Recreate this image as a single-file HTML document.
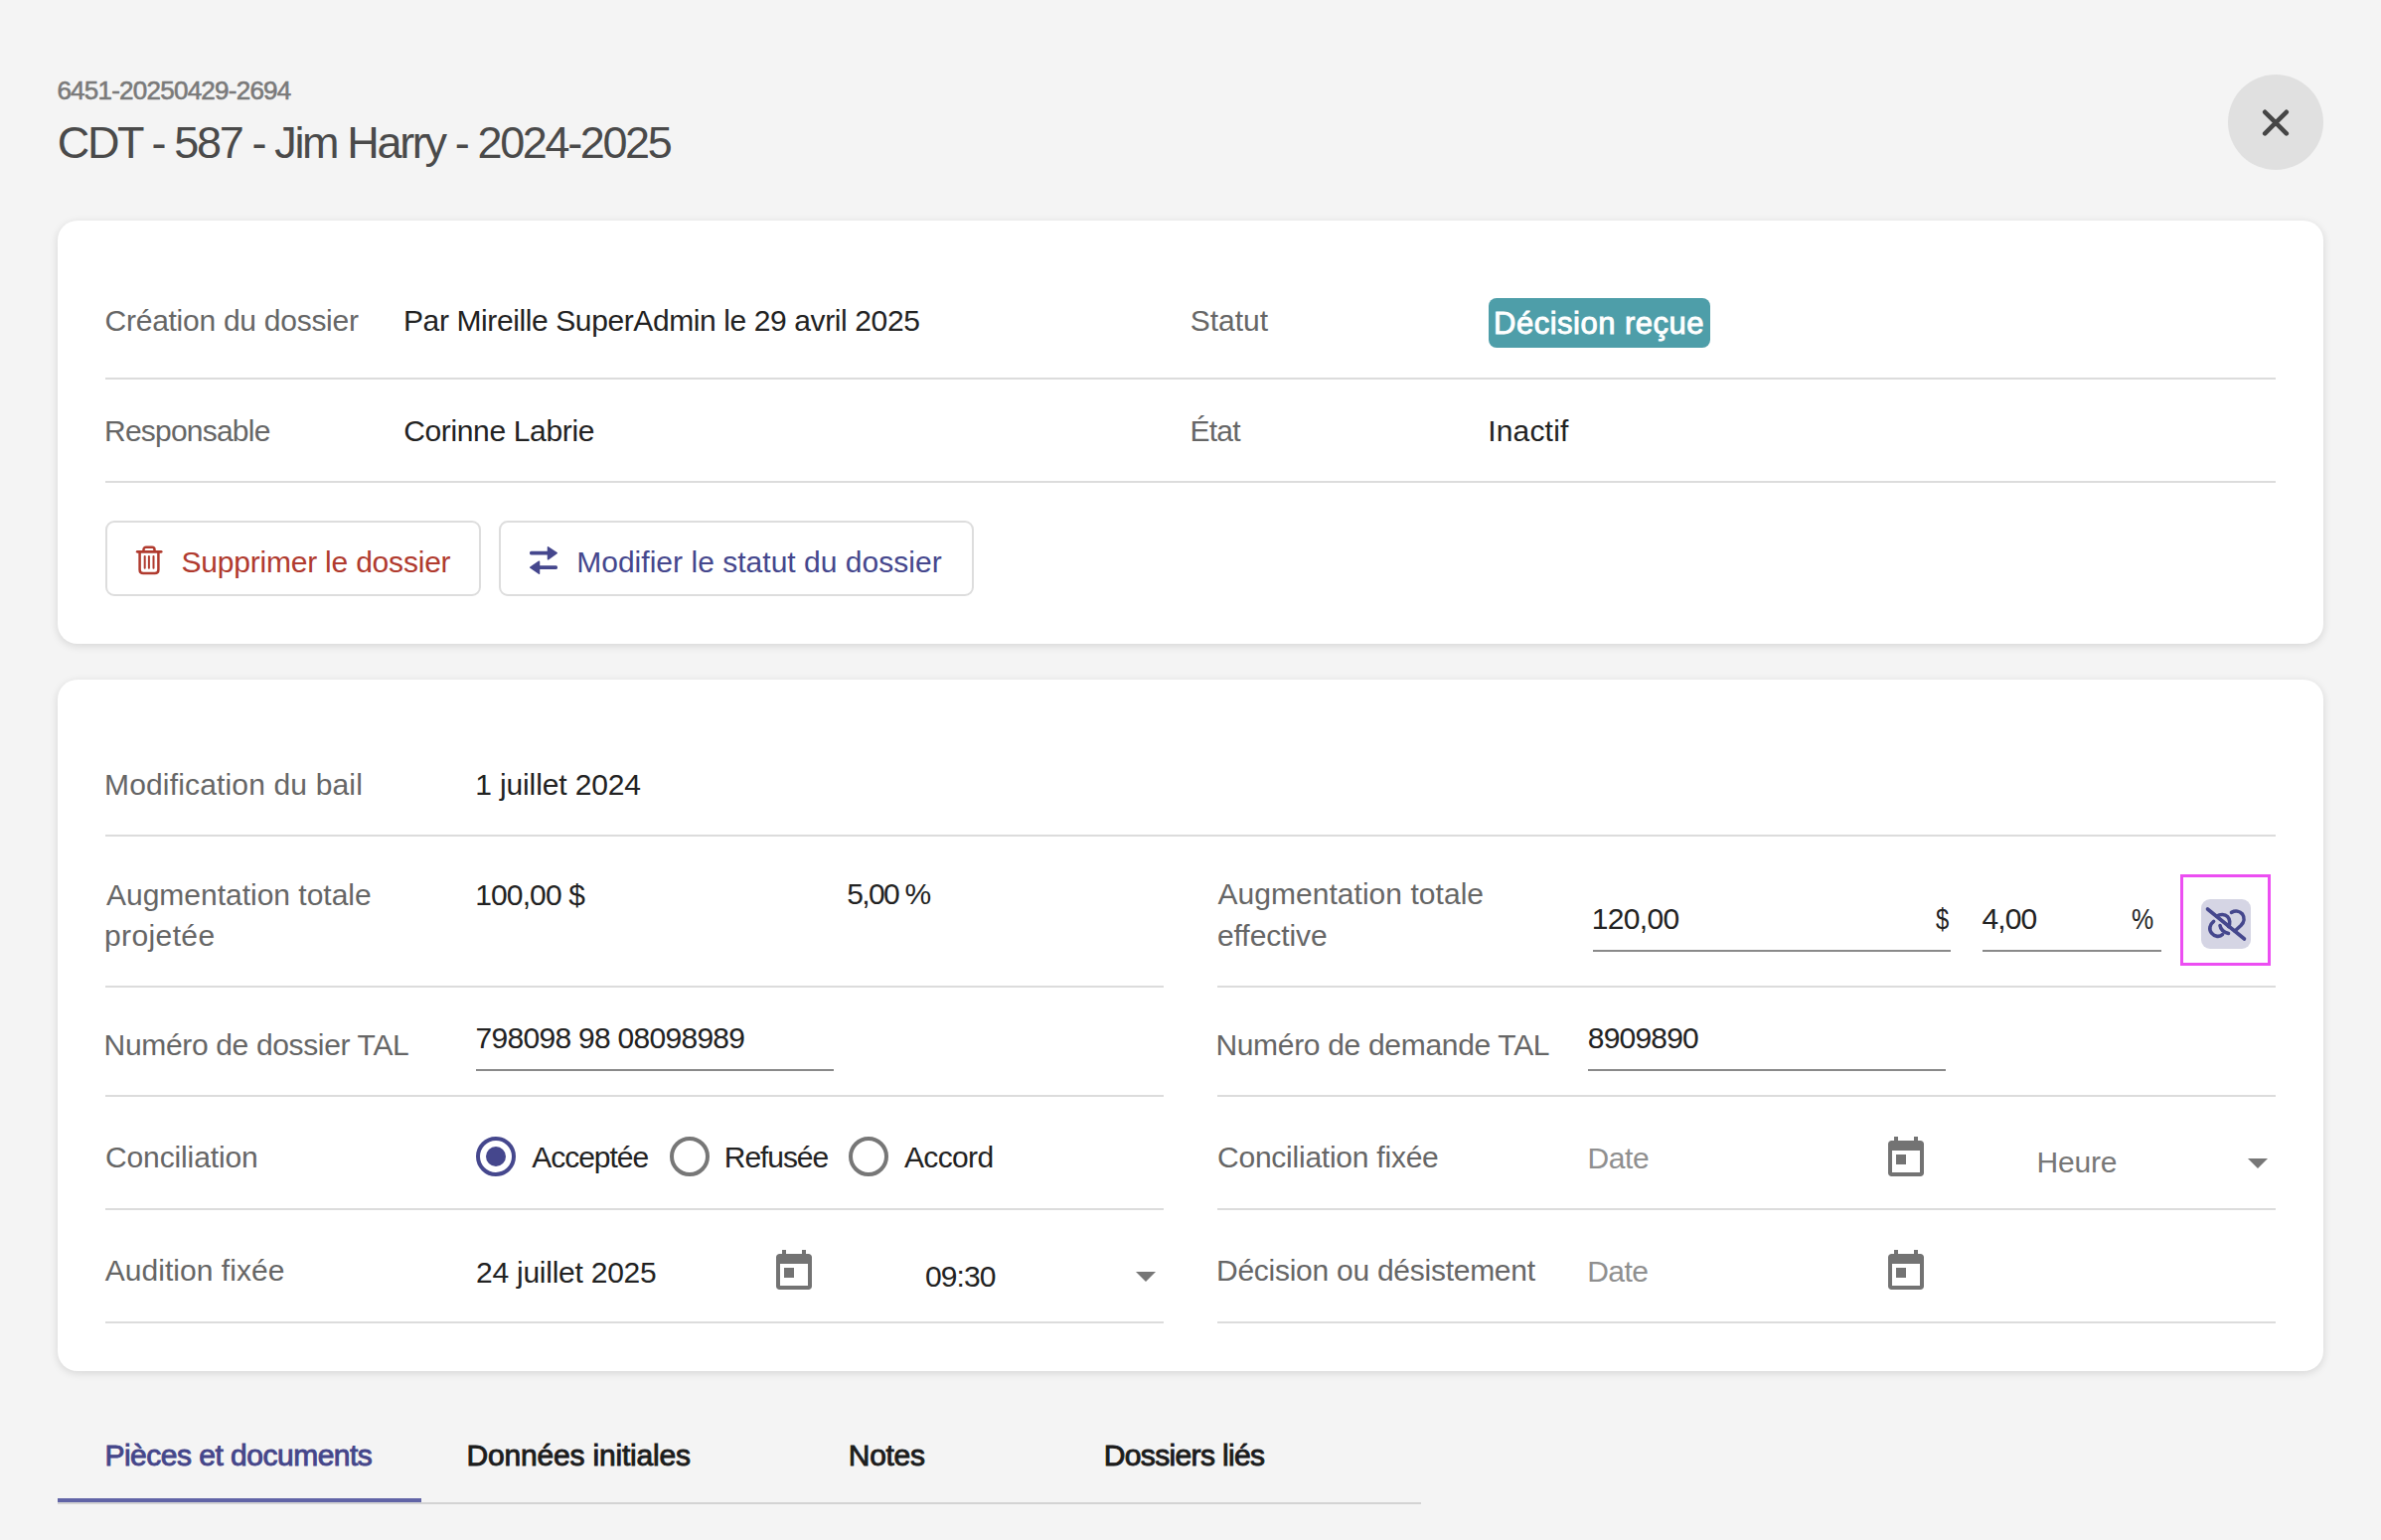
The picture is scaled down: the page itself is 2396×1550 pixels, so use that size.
<!DOCTYPE html>
<html><head><meta charset="utf-8"><style>
html,body{margin:0;padding:0}
body{width:2396px;height:1550px;background:#f4f4f4;position:relative;overflow:hidden;font-family:"Liberation Sans",sans-serif}
.t{position:absolute;white-space:nowrap;font-family:"Liberation Sans",sans-serif}
.a{position:absolute}
.card{background:#fff;border-radius:20px;box-shadow:0 2px 8px rgba(0,0,0,0.13)}
.div{height:2px;background:#dcdcdc}
.ul{height:2px;background:#8a8a8a}
.btn{border:2px solid #dddddd;border-radius:9px;background:#fff}
.radio{width:40px;height:40px;box-sizing:border-box;border-radius:50%;border:4.5px solid #777}
.radio.on{border-color:#45478d}


</style></head><body>
<!-- cards -->
<div class="a card" style="left:58px;top:222px;width:2280px;height:426px"></div>
<div class="a card" style="left:58px;top:684px;width:2280px;height:696px"></div>
<!-- close button -->
<div class="a" style="left:2242px;top:75px;width:96px;height:96px;border-radius:50%;background:#e0e0e0"></div>
<svg class="a" style="left:2266px;top:100px" width="48" height="48" viewBox="0 0 24 24"><path d="M6.6 6.4L17.4 17.2M17.4 6.4L6.6 17.2" stroke="#464646" stroke-width="2.3" stroke-linecap="round" fill="none"/></svg>
<!-- card1 dividers -->
<div class="a div" style="left:106px;top:380px;width:2184px"></div>
<div class="a div" style="left:106px;top:484px;width:2184px"></div>
<!-- badge -->
<div class="a" style="left:1498px;top:300px;width:223px;height:50px;border-radius:8px;background:#4e9ea9"></div>
<!-- buttons -->
<div class="a btn" style="left:106px;top:524px;width:374px;height:72px"></div>
<div class="a btn" style="left:502px;top:524px;width:474px;height:72px"></div>
<svg class="a" style="left:136px;top:548px" width="28" height="32" viewBox="0 0 28 32">
 <path d="M2.2 7.3H26.2" stroke="#b03a2e" stroke-width="2.7" stroke-linecap="round" fill="none"/>
 <path d="M8.5 6.5V5.2C8.5 3.6 9.6 2.8 11 2.8H17C18.4 2.8 19.5 3.6 19.5 5.2V6.5" stroke="#b03a2e" stroke-width="2.5" fill="none"/>
 <path d="M4.6 8V25.5C4.6 28.2 6 29 8.2 29H19.8C22 29 23.4 28.2 23.4 25.5V8" stroke="#b03a2e" stroke-width="2.5" fill="none"/>
 <path d="M9.7 12V23.8M13.9 12V23.8M18.5 12V23.8" stroke="#b03a2e" stroke-width="2" stroke-linecap="round" fill="none"/>
</svg>
<svg class="a" style="left:533px;top:550px" width="28" height="28" viewBox="0 0 28 28">
 <path d="M1.8 6.7H20" stroke="#45478d" stroke-width="3.7" stroke-linecap="round" fill="none"/>
 <path d="M18.5 0.8L27.2 6.7L18.5 12.8Z" fill="#45478d" stroke="#45478d" stroke-width="1.5" stroke-linejoin="round"/>
 <path d="M8 21.2H26.2" stroke="#45478d" stroke-width="3.7" stroke-linecap="round" fill="none"/>
 <path d="M9.5 15.2L0.8 21.2L9.5 27.2Z" fill="#45478d" stroke="#45478d" stroke-width="1.5" stroke-linejoin="round"/>
</svg>
<!-- card2 dividers -->
<div class="a div" style="left:106px;top:840px;width:2184px"></div>
<div class="a div" style="left:106px;top:992px;width:1065px"></div>
<div class="a div" style="left:1225px;top:992px;width:1065px"></div>
<div class="a div" style="left:106px;top:1102px;width:1065px"></div>
<div class="a div" style="left:1225px;top:1102px;width:1065px"></div>
<div class="a div" style="left:106px;top:1216px;width:1065px"></div>
<div class="a div" style="left:1225px;top:1216px;width:1065px"></div>
<div class="a div" style="left:106px;top:1330px;width:1065px"></div>
<div class="a div" style="left:1225px;top:1330px;width:1065px"></div>
<!-- input underlines -->
<div class="a ul" style="left:1603px;top:956px;width:360px"></div>
<div class="a ul" style="left:1995px;top:956px;width:180px"></div>
<div class="a ul" style="left:479px;top:1076px;width:360px"></div>
<div class="a ul" style="left:1598px;top:1076px;width:360px"></div>
<!-- link toggle -->
<div class="a" style="left:2194px;top:880px;width:85px;height:86px;border:3px solid #ec4ef2"></div>
<div class="a" style="left:2215px;top:905px;width:50px;height:50px;border-radius:9px;background:#d5d5e4"></div>
<svg class="a" style="left:2215px;top:905px" width="50" height="50" viewBox="0 0 50 50">
 <g stroke="#45478d" stroke-width="3.6" fill="none" stroke-linecap="round">
  <path d="M6.5 10L43.5 40"/>
  <path d="M12.6 22.3C8.5 25.5 7.6 30.5 10.5 34.2C13.4 37.9 18.8 38.4 21.5 35.6"/>
  <path d="M16 17C19 15 24 15 26.5 17.5C29 20 29.5 24.5 27.5 27.5"/>
  <path d="M30.5 13.3C34.5 11.2 39 12 41.5 15C44 18.5 43.5 23 40 26.5L34 32"/>
  <path d="M19 26.5C19.5 30 22 33 27.5 34.5"/>
 </g>
</svg>
<!-- radios -->
<div class="a radio on" style="left:479px;top:1144px"></div>
<div class="a" style="left:489px;top:1154px;width:20px;height:20px;border-radius:50%;background:#45478d"></div>
<div class="a radio" style="left:674px;top:1144px"></div>
<div class="a radio" style="left:854px;top:1144px"></div>
<!-- calendars -->
<svg class="a cal" style="left:781px;top:1258px" width="36" height="40" viewBox="0 0 36 40"><path fill="#737373" fill-rule="evenodd" d="M3.5 4H6V0H10V4H26V0H30V4H32.5C34.5 4 36 5.5 36 7.5V36.5C36 38.5 34.5 40 32.5 40H3.5C1.5 40 0 38.5 0 36.5V7.5C0 5.5 1.5 4 3.5 4ZM4 14V36H32V14ZM8 18H18V28H8Z"/></svg>
<svg class="a cal" style="left:1900px;top:1144px" width="36" height="40" viewBox="0 0 36 40"><path fill="#737373" fill-rule="evenodd" d="M3.5 4H6V0H10V4H26V0H30V4H32.5C34.5 4 36 5.5 36 7.5V36.5C36 38.5 34.5 40 32.5 40H3.5C1.5 40 0 38.5 0 36.5V7.5C0 5.5 1.5 4 3.5 4ZM4 14V36H32V14ZM8 18H18V28H8Z"/></svg>
<svg class="a cal" style="left:1900px;top:1258px" width="36" height="40" viewBox="0 0 36 40"><path fill="#737373" fill-rule="evenodd" d="M3.5 4H6V0H10V4H26V0H30V4H32.5C34.5 4 36 5.5 36 7.5V36.5C36 38.5 34.5 40 32.5 40H3.5C1.5 40 0 38.5 0 36.5V7.5C0 5.5 1.5 4 3.5 4ZM4 14V36H32V14ZM8 18H18V28H8Z"/></svg>
<!-- dropdown arrows -->
<svg class="a" style="left:1143px;top:1280px" width="20" height="10" viewBox="0 0 20 10"><path d="M0 0H20L10 10Z" fill="#777"/></svg>
<svg class="a" style="left:2262px;top:1166px" width="20" height="10" viewBox="0 0 20 10"><path d="M0 0H20L10 10Z" fill="#777"/></svg>
<!-- tabs -->
<div class="a" style="left:58px;top:1512px;width:1372px;height:2px;background:#d3d3d3"></div>
<div class="a" style="left:58px;top:1508px;width:366px;height:4px;background:#6164a6"></div>

<div class="t" id="id" style="left:57.40px;top:78.00px;font-size:26px;line-height:26px;font-weight:normal;-webkit-text-stroke:0.6px currentColor;letter-spacing:-0.753px;color:#7a7a7a">6451-20250429-2694</div>
<div class="t" id="title" style="left:57.80px;top:120.80px;font-size:45px;line-height:45px;font-weight:normal;letter-spacing:-2.356px;color:#4a4a4a">CDT - 587 - Jim Harry - 2024-2025</div>
<div class="t" id="l_creation" style="left:105.60px;top:307.50px;font-size:30px;line-height:30px;font-weight:normal;letter-spacing:-0.267px;color:#666666">Création du dossier</div>
<div class="t" id="v_creation" style="left:406.00px;top:307.50px;font-size:30px;line-height:30px;font-weight:normal;letter-spacing:-0.395px;color:#222222">Par Mireille SuperAdmin le 29 avril 2025</div>
<div class="t" id="l_statut" style="left:1197.80px;top:307.50px;font-size:30px;line-height:30px;font-weight:normal;letter-spacing:-0.020px;color:#666666">Statut</div>
<div class="t" id="v_badge" style="left:1503.00px;top:310.20px;font-size:31px;line-height:31px;font-weight:normal;-webkit-text-stroke:0.9px currentColor;letter-spacing:0.500px;color:#ffffff">Décision reçue</div>
<div class="t" id="l_resp" style="left:105.00px;top:419.20px;font-size:30px;line-height:30px;font-weight:normal;letter-spacing:-0.780px;color:#666666">Responsable</div>
<div class="t" id="v_resp" style="left:406.20px;top:419.20px;font-size:30px;line-height:30px;font-weight:normal;letter-spacing:-0.354px;color:#222222">Corinne Labrie</div>
<div class="t" id="l_etat" style="left:1197.40px;top:418.90px;font-size:30px;line-height:30px;font-weight:normal;letter-spacing:-0.733px;color:#666666">État</div>
<div class="t" id="v_etat" style="left:1497.20px;top:418.90px;font-size:30px;line-height:30px;font-weight:normal;letter-spacing:0.183px;color:#222222">Inactif</div>
<div class="t" id="b_suppr" style="left:182.40px;top:550.50px;font-size:30px;line-height:30px;font-weight:normal;letter-spacing:-0.205px;color:#b03a2e">Supprimer le dossier</div>
<div class="t" id="b_modif" style="left:580.20px;top:550.50px;font-size:30px;line-height:30px;font-weight:normal;letter-spacing:0.025px;color:#45478d">Modifier le statut du dossier</div>
<div class="t" id="l_modif" style="left:105.00px;top:775.30px;font-size:30px;line-height:30px;font-weight:normal;letter-spacing:0.158px;color:#666666">Modification du bail</div>
<div class="t" id="v_modif" style="left:478.20px;top:775.30px;font-size:30px;line-height:30px;font-weight:normal;letter-spacing:-0.123px;color:#222222">1 juillet 2024</div>
<div class="t" id="l_aug1a" style="left:107.00px;top:885.50px;font-size:30px;line-height:30px;font-weight:normal;letter-spacing:-0.011px;color:#666666">Augmentation totale</div>
<div class="t" id="l_aug1b" style="left:105.00px;top:927.00px;font-size:30px;line-height:30px;font-weight:normal;letter-spacing:0.386px;color:#666666">projetée</div>
<div class="t" id="v_aug1" style="left:478.20px;top:885.50px;font-size:30px;line-height:30px;font-weight:normal;letter-spacing:-0.871px;color:#222222">100,00 $</div>
<div class="t" id="v_aug1p" style="left:852.20px;top:885.20px;font-size:30px;line-height:30px;font-weight:normal;letter-spacing:-1.660px;color:#222222">5,00 %</div>
<div class="t" id="l_aug2a" style="left:1225.40px;top:885.30px;font-size:30px;line-height:30px;font-weight:normal;letter-spacing:0.044px;color:#666666">Augmentation totale</div>
<div class="t" id="l_aug2b" style="left:1225.00px;top:927.00px;font-size:30px;line-height:30px;font-weight:normal;letter-spacing:-0.062px;color:#666666">effective</div>
<div class="t" id="v_120" style="left:1601.80px;top:910.00px;font-size:30px;line-height:30px;font-weight:normal;letter-spacing:-0.680px;color:#222222">120,00</div>
<div class="t" id="v_dol" style="left:1948.04px;top:910.00px;font-size:30px;line-height:30px;font-weight:normal;letter-spacing:0.000px;transform:scaleX(0.794);transform-origin:0 0;color:#222222">$</div>
<div class="t" id="v_4" style="left:1994.60px;top:910.00px;font-size:30px;line-height:30px;font-weight:normal;letter-spacing:-0.933px;color:#222222">4,00</div>
<div class="t" id="v_pct" style="left:2144.75px;top:910.00px;font-size:30px;line-height:30px;font-weight:normal;letter-spacing:0.000px;transform:scaleX(0.833);transform-origin:0 0;color:#222222">%</div>
<div class="t" id="l_tal1" style="left:104.60px;top:1037.20px;font-size:30px;line-height:30px;font-weight:normal;letter-spacing:-0.345px;color:#666666">Numéro de dossier TAL</div>
<div class="t" id="v_tal1" style="left:478.60px;top:1029.80px;font-size:30px;line-height:30px;font-weight:normal;letter-spacing:-0.718px;color:#222222">798098 98 08098989</div>
<div class="t" id="l_tal2" style="left:1223.40px;top:1037.20px;font-size:30px;line-height:30px;font-weight:normal;letter-spacing:-0.315px;color:#666666">Numéro de demande TAL</div>
<div class="t" id="v_tal2" style="left:1597.80px;top:1029.80px;font-size:30px;line-height:30px;font-weight:normal;letter-spacing:-0.817px;color:#222222">8909890</div>
<div class="t" id="l_conc" style="left:106.00px;top:1150.00px;font-size:30px;line-height:30px;font-weight:normal;letter-spacing:-0.127px;color:#666666">Conciliation</div>
<div class="t" id="r_acc" style="left:535.20px;top:1150.00px;font-size:30px;line-height:30px;font-weight:normal;letter-spacing:-1.014px;color:#222222">Acceptée</div>
<div class="t" id="r_ref" style="left:728.80px;top:1150.00px;font-size:30px;line-height:30px;font-weight:normal;letter-spacing:-1.067px;color:#222222">Refusée</div>
<div class="t" id="r_accord" style="left:910.00px;top:1150.00px;font-size:30px;line-height:30px;font-weight:normal;letter-spacing:-0.660px;color:#222222">Accord</div>
<div class="t" id="l_concf" style="left:1225.00px;top:1149.70px;font-size:30px;line-height:30px;font-weight:normal;letter-spacing:-0.235px;color:#666666">Conciliation fixée</div>
<div class="t" id="p_date1" style="left:1597.40px;top:1151.10px;font-size:30px;line-height:30px;font-weight:normal;letter-spacing:-0.333px;color:#8f8f8f">Date</div>
<div class="t" id="p_heure" style="left:2049.40px;top:1155.00px;font-size:30px;line-height:30px;font-weight:normal;letter-spacing:-0.175px;color:#777777">Heure</div>
<div class="t" id="l_aud" style="left:105.80px;top:1263.50px;font-size:30px;line-height:30px;font-weight:normal;letter-spacing:0.031px;color:#666666">Audition fixée</div>
<div class="t" id="v_aud" style="left:479.00px;top:1265.50px;font-size:30px;line-height:30px;font-weight:normal;letter-spacing:-0.243px;color:#222222">24 juillet 2025</div>
<div class="t" id="v_0930" style="left:931.00px;top:1270.00px;font-size:30px;line-height:30px;font-weight:normal;letter-spacing:-0.925px;color:#222222">09:30</div>
<div class="t" id="l_dec" style="left:1224.00px;top:1263.50px;font-size:30px;line-height:30px;font-weight:normal;letter-spacing:-0.264px;color:#666666">Décision ou désistement</div>
<div class="t" id="p_date2" style="left:1597.20px;top:1265.10px;font-size:30px;line-height:30px;font-weight:normal;letter-spacing:-0.533px;color:#8f8f8f">Date</div>
<div class="t" id="t_pieces" style="left:105.40px;top:1450.40px;font-size:30px;line-height:30px;font-weight:normal;-webkit-text-stroke:0.9px currentColor;letter-spacing:-0.500px;color:#45468a">Pièces et documents</div>
<div class="t" id="t_donnees" style="left:469.60px;top:1450.40px;font-size:30px;line-height:30px;font-weight:normal;-webkit-text-stroke:0.9px currentColor;letter-spacing:-0.188px;color:#1c1c1c">Données initiales</div>
<div class="t" id="t_notes" style="left:853.80px;top:1450.40px;font-size:30px;line-height:30px;font-weight:normal;-webkit-text-stroke:0.9px currentColor;letter-spacing:-0.300px;color:#1c1c1c">Notes</div>
<div class="t" id="t_dossiers" style="left:1110.80px;top:1450.40px;font-size:30px;line-height:30px;font-weight:normal;-webkit-text-stroke:0.9px currentColor;letter-spacing:-0.658px;color:#1c1c1c">Dossiers liés</div>
</body></html>
